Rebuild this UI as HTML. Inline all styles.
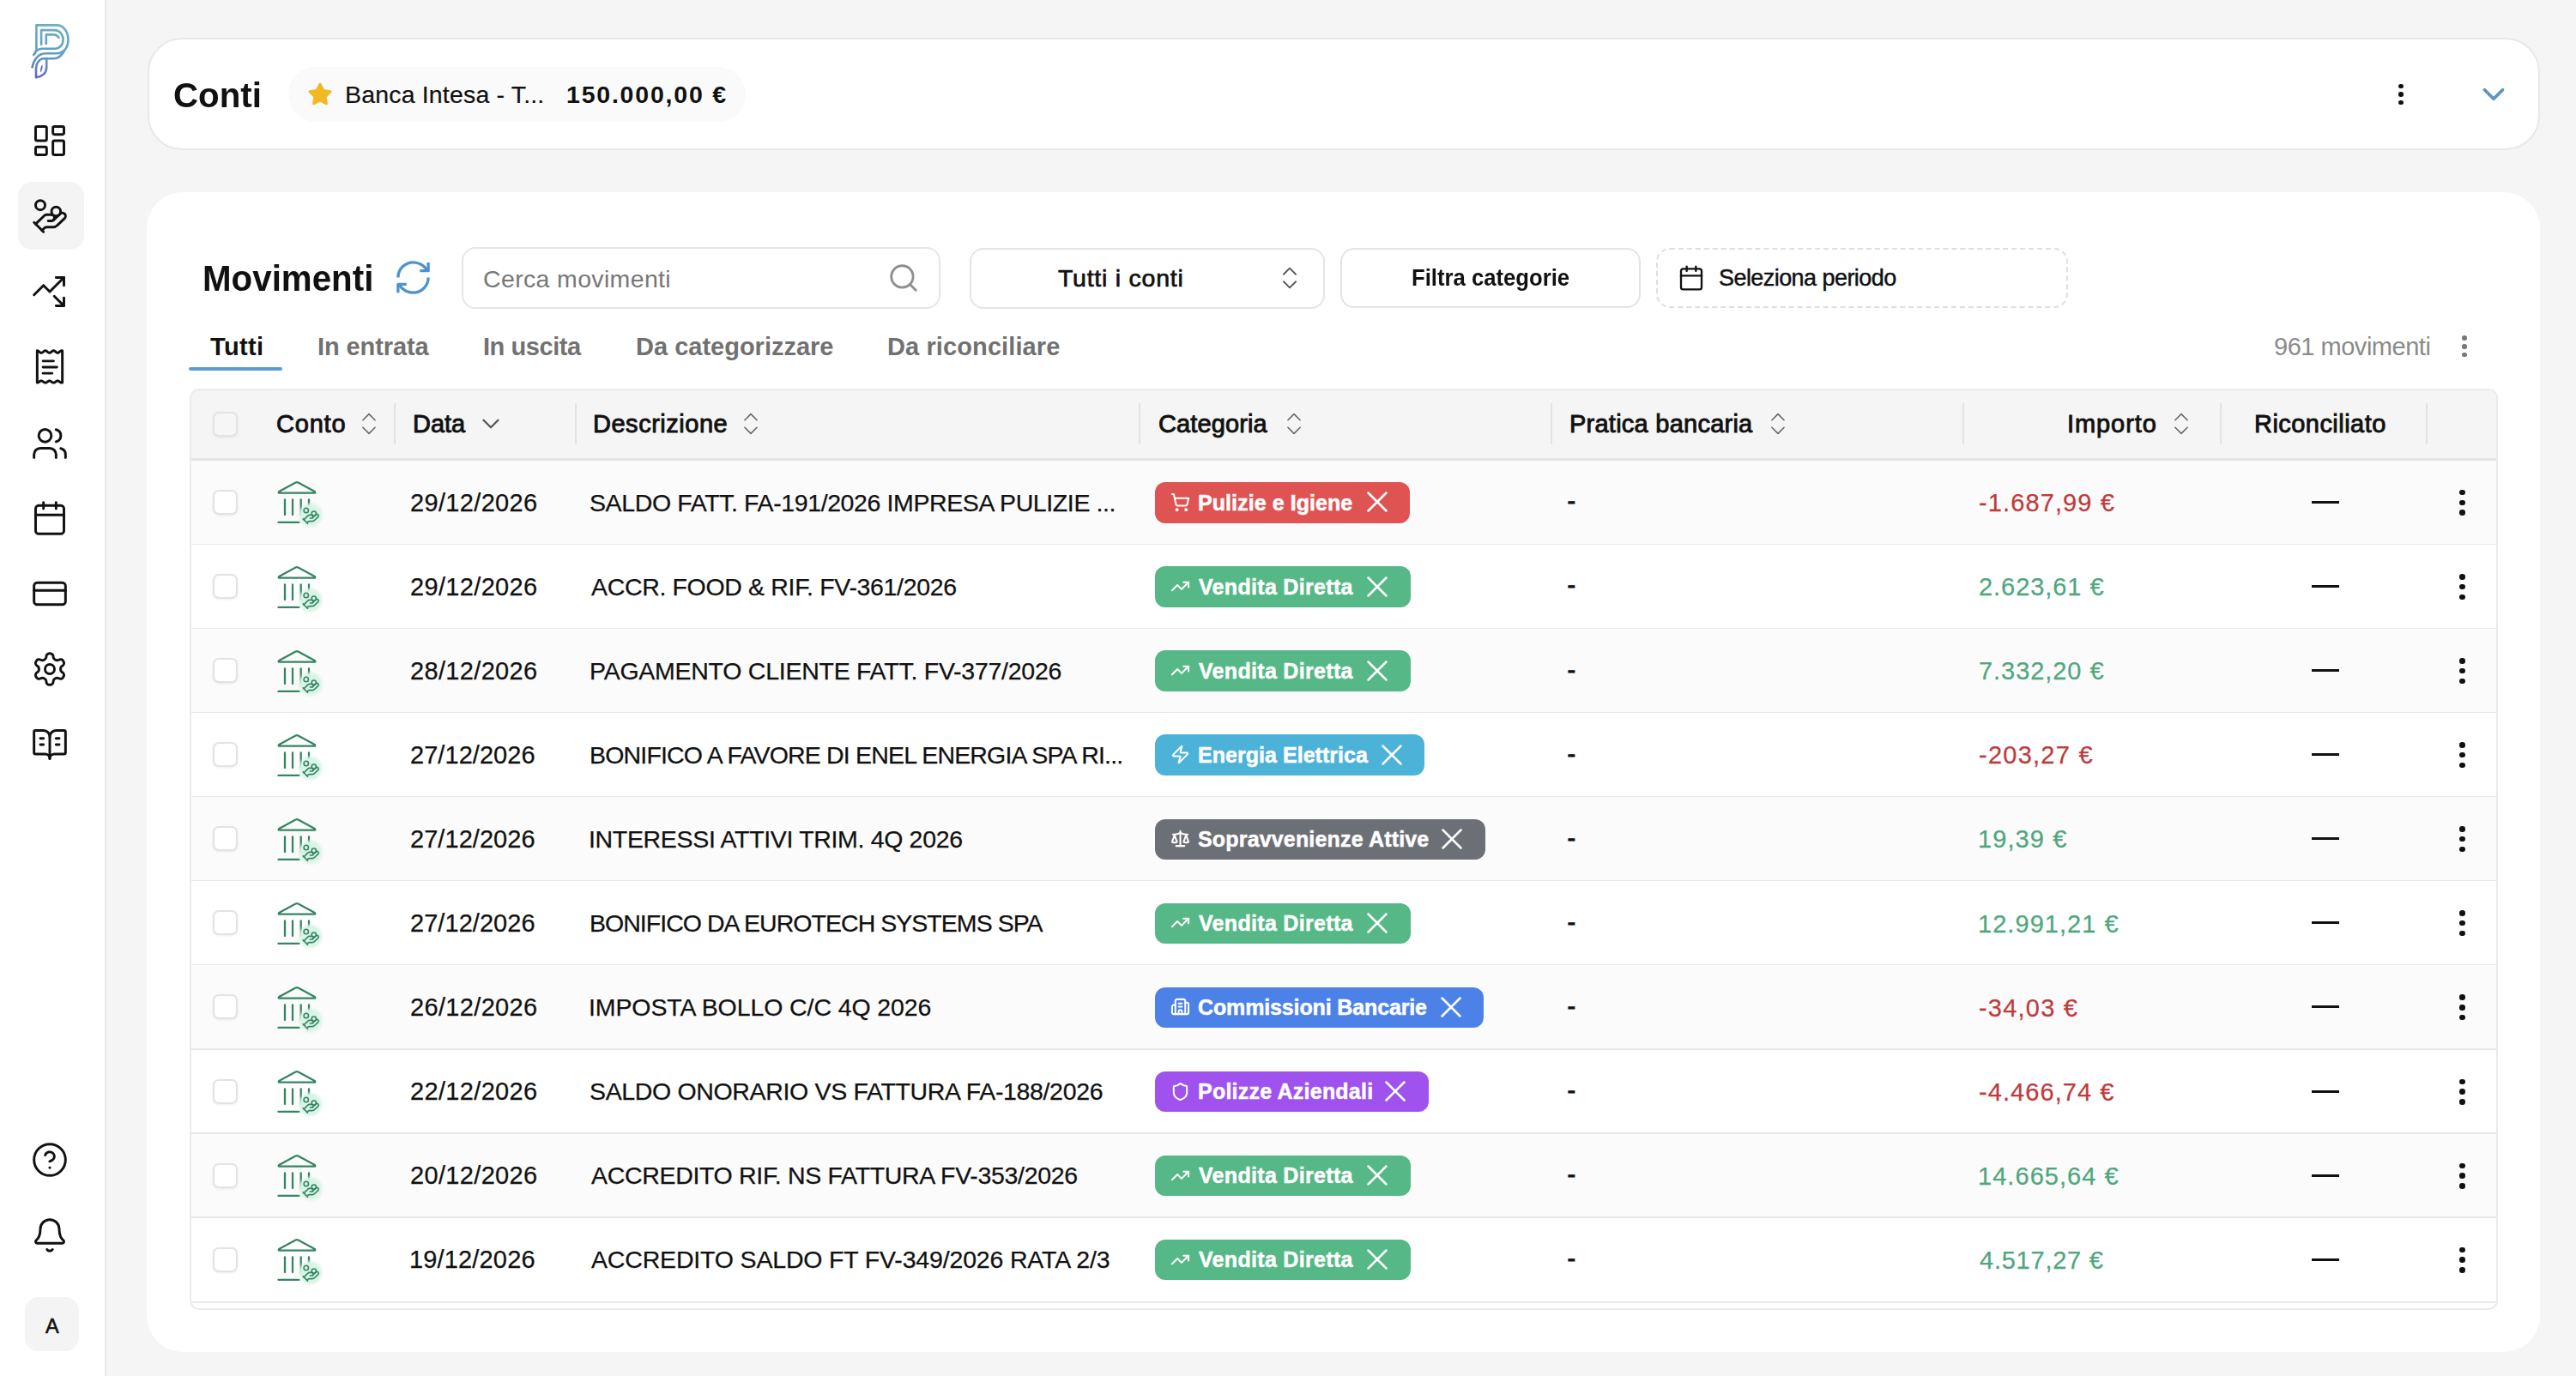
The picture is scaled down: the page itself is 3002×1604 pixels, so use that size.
<!DOCTYPE html>
<html><head><meta charset="utf-8"><title>Movimenti</title>
<style>
html,body{margin:0;padding:0;}
body{width:3002px;height:1604px;position:relative;overflow:hidden;background:#f5f5f5;font-family:"Liberation Sans", sans-serif;}
.t{position:absolute;white-space:nowrap;line-height:1;}
.b{position:absolute;}
.i{position:absolute;overflow:visible;}
</style></head><body>
<div class="b" style="left:0.0px;top:0.0px;width:122.0px;height:1604.0px;background:#fff;border-right:2px solid #e9e9e9;"></div>
<svg class="i" style="left:25px;top:20px" width="70" height="80" viewBox="25 20 70 80" fill="none" stroke-width="2.6" stroke-linecap="butt" stroke-linejoin="round">
<defs><linearGradient id="lg" gradientUnits="userSpaceOnUse" x1="62" y1="28" x2="44" y2="92"><stop offset="0" stop-color="#6cb0c2"/><stop offset="0.5" stop-color="#5f9fc3"/><stop offset="0.78" stop-color="#5d86c6"/><stop offset="1" stop-color="#5a5fcf"/></linearGradient></defs>
<g stroke="url(#lg)">
<path d="M42.4 57.7 V29.4 H66 C74 29.4 79.5 37 79.5 46.3 C79.5 51 78 55 75.9 57.7"/>
<path d="M42.4 57.7 C42 60.5 40.2 62.8 38.6 64.9"/>
<path d="M48.1 52.8 V35.1 H63.8 C69 35.1 73.6 40 73.6 45.9 C73.6 52 69.5 56.7 63.8 56.7 H50 C46 56.9 43.5 58 42.3 59.5"/>
<path d="M53.8 52.1 V40.4 H62.5 C65 40.4 67.5 42 69 44.6"/>
<path d="M75.9 57.7 C73.5 60.5 70.5 62.3 66 62.3 H53 C45 62.5 39 69 37.4 79.4"/>
<path d="M75.9 57.7 C73 63.5 69 68.3 63 68.3 H51 C45.5 68.5 42 74 42 80 V90.3 C49 89.5 54.2 85 54.2 79 V68.5"/>
</g>
<path d="M49.3 75 C50.2 79 49 82 47.3 84.8 C46.6 81 47.3 78 49.3 75Z" fill="#5b70c8"/>
</svg>
<div class="b" style="left:21.0px;top:212.0px;width:77.0px;height:79.0px;background:#f4f4f4;border-radius:16px;"></div>
<svg class="i" style="left:36.0px;top:141.7px;" width="44" height="44" viewBox="0 0 24 24" fill="none" stroke="#111" stroke-width="1.6" stroke-linecap="round" stroke-linejoin="round"><rect width="7" height="9" x="3" y="3" rx="1"/><rect width="7" height="5" x="14" y="3" rx="1"/><rect width="7" height="9" x="14" y="12" rx="1"/><rect width="7" height="5" x="3" y="16" rx="1"/></svg>
<svg class="i" style="left:36.0px;top:229.7px;" width="44" height="44" viewBox="0 0 24 24" fill="none" stroke="#111" stroke-width="1.6" stroke-linecap="round" stroke-linejoin="round"><path d="M11 15h2a2 2 0 1 0 0-4h-3c-.6 0-1.1.2-1.4.6L3 17"/><path d="m7 21 1.6-1.4c.3-.4.8-.6 1.4-.6h4c1.1 0 2.1-.4 2.8-1.2l4.6-4.4a2 2 0 0 0-2.75-2.91l-4.2 3.9"/><path d="m2 16 6 6"/><circle cx="16" cy="9" r="2.9"/><circle cx="6" cy="5" r="3"/></svg>
<svg class="i" style="left:36.0px;top:317.5px;" width="44" height="44" viewBox="0 0 24 24" fill="none" stroke="#111" stroke-width="1.6" stroke-linecap="round" stroke-linejoin="round"><path d="M14.828 14.828 21 21"/><path d="M21 16v5h-5"/><path d="m21 3-9 9-4-4-6 6"/><path d="M21 8V3h-5"/></svg>
<svg class="i" style="left:36.0px;top:406.0px;" width="44" height="44" viewBox="0 0 24 24" fill="none" stroke="#111" stroke-width="1.6" stroke-linecap="round" stroke-linejoin="round"><path d="M4.00 1.50 L4.25 1.53 L4.50 1.62 L4.75 1.77 L5.00 1.95 L5.25 2.16 L5.50 2.37 L5.75 2.56 L6.00 2.72 L6.25 2.84 L6.50 2.89 L6.75 2.89 L7.00 2.82 L7.25 2.69 L7.50 2.53 L7.75 2.33 L8.00 2.12 L8.25 1.91 L8.50 1.74 L8.75 1.60 L9.00 1.52 L9.25 1.50 L9.50 1.55 L9.75 1.65 L10.00 1.80 L10.25 1.99 L10.50 2.20 L10.75 2.41 L11.00 2.60 L11.25 2.75 L11.50 2.85 L11.75 2.90 L12.00 2.88 L12.25 2.80 L12.50 2.66 L12.75 2.49 L13.00 2.28 L13.25 2.07 L13.50 1.87 L13.75 1.71 L14.00 1.58 L14.25 1.51 L14.50 1.51 L14.75 1.56 L15.00 1.68 L15.25 1.84 L15.50 2.03 L15.75 2.24 L16.00 2.45 L16.25 2.63 L16.50 2.78 L16.75 2.87 L17.00 2.90 L17.25 2.87 L17.50 2.78 L17.75 2.63 L18.00 2.45 L18.25 2.24 L18.50 2.03 L18.75 1.84 L19.00 1.68 L19.25 1.56 L19.50 1.51 L19.75 1.51 L20.00 1.58 L20.00 21.83 L19.75 21.89 L19.50 21.90 L19.25 21.85 L19.00 21.75 L18.75 21.61 L18.50 21.44 L18.25 21.26 L18.00 21.09 L17.75 20.93 L17.50 20.81 L17.25 20.73 L17.00 20.70 L16.75 20.73 L16.50 20.81 L16.25 20.93 L16.00 21.09 L15.75 21.26 L15.50 21.44 L15.25 21.61 L15.00 21.75 L14.75 21.85 L14.50 21.90 L14.25 21.89 L14.00 21.83 L13.75 21.72 L13.50 21.58 L13.25 21.41 L13.00 21.23 L12.75 21.05 L12.50 20.90 L12.25 20.79 L12.00 20.72 L11.75 20.70 L11.50 20.74 L11.25 20.83 L11.00 20.96 L10.75 21.12 L10.50 21.30 L10.25 21.48 L10.00 21.64 L9.75 21.77 L9.50 21.86 L9.25 21.90 L9.00 21.88 L8.75 21.81 L8.50 21.70 L8.25 21.55 L8.00 21.37 L7.75 21.19 L7.50 21.02 L7.25 20.88 L7.00 20.77 L6.75 20.71 L6.50 20.70 L6.25 20.75 L6.00 20.85 L5.75 20.99 L5.50 21.16 L5.25 21.34 L5.00 21.51 L4.75 21.67 L4.50 21.79 L4.25 21.87 L4.00 21.90Z"/><path d="M7.7 8.1h6.7"/><path d="M7.7 12h8.8"/><path d="M7.7 15.9h5.7"/></svg>
<svg class="i" style="left:36.0px;top:494.6px;" width="44" height="44" viewBox="0 0 24 24" fill="none" stroke="#111" stroke-width="1.6" stroke-linecap="round" stroke-linejoin="round"><path d="M16 21v-2a4 4 0 0 0-4-4H6a4 4 0 0 0-4 4v2"/><circle cx="9" cy="7" r="4"/><path d="M22 21v-2a4 4 0 0 0-3-3.87"/><path d="M16 3.13a4 4 0 0 1 0 7.75"/></svg>
<svg class="i" style="left:36.0px;top:582.0px;" width="44" height="44" viewBox="0 0 24 24" fill="none" stroke="#111" stroke-width="1.6" stroke-linecap="round" stroke-linejoin="round"><path d="M8 2v4"/><path d="M16 2v4"/><rect width="18" height="18" x="3" y="4" rx="2"/><path d="M3 10h18"/></svg>
<svg class="i" style="left:36.0px;top:669.8px;" width="44" height="44" viewBox="0 0 24 24" fill="none" stroke="#111" stroke-width="1.6" stroke-linecap="round" stroke-linejoin="round"><rect width="20" height="14" x="2" y="5" rx="2"/><line x1="2" x2="22" y1="10" y2="10"/></svg>
<svg class="i" style="left:36.0px;top:757.7px;" width="44" height="44" viewBox="0 0 24 24" fill="none" stroke="#111" stroke-width="1.6" stroke-linecap="round" stroke-linejoin="round"><path d="M12.22 2h-.44a2 2 0 0 0-2 2v.18a2 2 0 0 1-1 1.73l-.43.25a2 2 0 0 1-2 0l-.15-.08a2 2 0 0 0-2.73.73l-.22.38a2 2 0 0 0 .73 2.73l.15.1a2 2 0 0 1 1 1.72v.51a2 2 0 0 1-1 1.74l-.15.09a2 2 0 0 0-.73 2.73l.22.38a2 2 0 0 0 2.73.73l.15-.08a2 2 0 0 1 2 0l.43.25a2 2 0 0 1 1 1.73V20a2 2 0 0 0 2 2h.44a2 2 0 0 0 2-2v-.18a2 2 0 0 1 1-1.73l.43-.25a2 2 0 0 1 2 0l.15.08a2 2 0 0 0 2.73-.73l.22-.39a2 2 0 0 0-.73-2.73l-.15-.08a2 2 0 0 1-1-1.74v-.5a2 2 0 0 1 1-1.74l.15-.09a2 2 0 0 0 .73-2.73l-.22-.38a2 2 0 0 0-2.73-.73l-.15.08a2 2 0 0 1-2 0l-.43-.25a2 2 0 0 1-1-1.73V4a2 2 0 0 0-2-2z"/><circle cx="12" cy="12" r="3"/></svg>
<svg class="i" style="left:36.0px;top:846.0px;" width="44" height="44" viewBox="0 0 24 24" fill="none" stroke="#111" stroke-width="1.6" stroke-linecap="round" stroke-linejoin="round"><path d="M12 7v14"/><path d="M16 12h2"/><path d="M16 8h2"/><path d="M3 18a1 1 0 0 1-1-1V4a1 1 0 0 1 1-1h5a4 4 0 0 1 4 4 4 4 0 0 1 4-4h5a1 1 0 0 1 1 1v13a1 1 0 0 1-1 1h-6a3 3 0 0 0-3 3 3 3 0 0 0-3-3z"/><path d="M6 12h2"/><path d="M6 8h2"/></svg>
<svg class="i" style="left:36.0px;top:1330.0px;" width="44" height="44" viewBox="0 0 24 24" fill="none" stroke="#111" stroke-width="1.6" stroke-linecap="round" stroke-linejoin="round"><circle cx="12" cy="12" r="10"/><path d="M9.09 9a3 3 0 0 1 5.83 1c0 2-3 3-3 3"/><path d="M12 17h.01"/></svg>
<svg class="i" style="left:36.0px;top:1418.0px;" width="44" height="44" viewBox="0 0 24 24" fill="none" stroke="#111" stroke-width="1.6" stroke-linecap="round" stroke-linejoin="round"><path d="M10.268 21a2 2 0 0 0 3.464 0"/><path d="M3.262 15.326A1 1 0 0 0 4 17h16a1 1 0 0 0 .74-1.673C19.41 13.956 18 12.499 18 8A6 6 0 0 0 6 8c0 4.499-1.411 5.956-2.738 7.326"/></svg>
<div class="b" style="left:29.0px;top:1512.0px;width:63.0px;height:63.0px;background:#f4f4f4;border-radius:16px;"></div>
<div class="t" id="t1" style="left:53.00px;top:1534.7px;font-size:23.5px;font-weight:400;color:#111;letter-spacing:-6.800px;-webkit-text-stroke:0.6px #111;">A</div>
<div class="b" style="left:172.0px;top:44.0px;width:2788.0px;height:131.0px;background:#fff;border:2px solid #e8e8e8;border-radius:40px;box-sizing:border-box;"></div>
<div class="t" id="t2" style="left:202.00px;top:90.7px;font-size:41px;font-weight:700;color:#111;letter-spacing:0.000px;transform:scaleX(0.9820);transform-origin:0 50%;">Conti</div>
<div class="b" style="left:336.0px;top:78.0px;width:533.0px;height:64.0px;background:#fafafa;border-radius:32px;"></div>
<svg class="i" style="left:358px;top:95px" width="30" height="30" viewBox="0 0 24 24" fill="#f2b823" stroke="#f2b823" stroke-width="1.5" stroke-linejoin="round"><path d="M11.525 2.295a.53.53 0 0 1 .95 0l2.31 4.679a2.123 2.123 0 0 0 1.595 1.16l5.166.756a.53.53 0 0 1 .294.904l-3.736 3.638a2.123 2.123 0 0 0-.611 1.878l.882 5.14a.53.53 0 0 1-.771.56l-4.618-2.428a2.122 2.122 0 0 0-1.973 0L6.396 21.01a.53.53 0 0 1-.77-.56l.881-5.139a2.122 2.122 0 0 0-.611-1.879L2.16 9.795a.53.53 0 0 1 .294-.906l5.165-.755a2.122 2.122 0 0 0 1.597-1.16z"/></svg>
<div class="t" id="t3" style="left:402.00px;top:95.7px;font-size:28.5px;font-weight:400;color:#111;letter-spacing:0.170px;-webkit-text-stroke:0.2px #111;">Banca Intesa - T...</div>
<div class="t" id="t4" style="left:660.00px;top:95.7px;font-size:28.5px;font-weight:700;color:#111;letter-spacing:1.788px;">150.000,00 €</div>
<div class="b" style="left:2795.2px;top:97.6px;width:5.6px;height:5.6px;background:#111;border-radius:50%;"></div>
<div class="b" style="left:2795.2px;top:107.2px;width:5.6px;height:5.6px;background:#111;border-radius:50%;"></div>
<div class="b" style="left:2795.2px;top:116.8px;width:5.6px;height:5.6px;background:#111;border-radius:50%;"></div>
<svg class="i" style="left:2885.0px;top:88.5px;" width="42" height="42" viewBox="0 0 24 24" fill="none" stroke="#5b95c0" stroke-width="2.2" stroke-linecap="round" stroke-linejoin="round"><path d="m6 9 6 6 6-6"/></svg>
<div class="b" style="left:170.5px;top:223.5px;width:2789.5px;height:1352.5px;background:#fff;border-radius:42px;"></div>
<div class="t" id="t5" style="left:236.00px;top:303.6px;font-size:42px;font-weight:700;color:#111;letter-spacing:0.000px;transform:scaleX(0.9599);transform-origin:0 50%;">Movimenti</div>
<svg class="i" style="left:457.5px;top:300.4px;stroke-linecap:butt;" width="47" height="47" viewBox="0 0 24 24" fill="none" stroke="#4f93ce" stroke-width="1.7" stroke-linecap="round" stroke-linejoin="round"><path d="M3 12a9 9 0 0 1 9-9 9.75 9.75 0 0 1 6.74 2.74L21 8"/><path d="M21 3v5h-5"/><path d="M21 12a9 9 0 0 1-9 9 9.75 9.75 0 0 1-6.74-2.74L3 16"/><path d="M8 16H3v5"/></svg>
<div class="b" style="left:537.5px;top:288.0px;width:558.0px;height:72.0px;background:#fff;border:2px solid #e6e6e6;border-radius:16px;box-sizing:border-box;"></div>
<div class="t" id="t6" style="left:563.00px;top:310.5px;font-size:28.5px;font-weight:400;color:#777777;letter-spacing:0.349px;">Cerca movimenti</div>
<svg class="i" style="left:1034.0px;top:304.5px;" width="38" height="38" viewBox="0 0 24 24" fill="none" stroke="#8e8e93" stroke-width="1.8" stroke-linecap="round" stroke-linejoin="round"><circle cx="11" cy="11" r="8"/><path d="m21 21-4.3-4.3"/></svg>
<div class="b" style="left:1130.0px;top:288.5px;width:414.0px;height:71.0px;background:#fff;border:2px solid #e4e4e4;border-radius:16px;box-sizing:border-box;"></div>
<div class="t" id="t7" style="left:1233.00px;top:309.5px;font-size:28.5px;font-weight:400;color:#111;letter-spacing:0.750px;-webkit-text-stroke:0.7px #111;">Tutti i conti</div>
<svg class="i" style="left:1485.5px;top:307.0px;" width="34" height="34" viewBox="0 0 24 24" fill="none" stroke="#555" stroke-width="1.3" stroke-linecap="round" stroke-linejoin="round"><path d="m7 15 5 5 5-5"/><path d="m7 9 5-5 5 5"/></svg>
<div class="b" style="left:1561.5px;top:289.0px;width:350.5px;height:70.0px;background:#fff;border:2px solid #e4e4e4;border-radius:16px;box-sizing:border-box;"></div>
<div class="t" id="t8" style="left:1645.00px;top:310.7px;font-size:27px;font-weight:700;color:#111;letter-spacing:0.000px;transform:scaleX(0.9509);transform-origin:0 50%;">Filtra categorie</div>
<div class="b" style="left:1929.5px;top:289.0px;width:480.5px;height:70.0px;background:#fff;border:2px dashed #dedede;border-radius:16px;box-sizing:border-box;"></div>
<svg class="i" style="left:1955.0px;top:308.0px;" width="32" height="32" viewBox="0 0 24 24" fill="none" stroke="#111" stroke-width="1.75" stroke-linecap="round" stroke-linejoin="round"><path d="M8 2v4"/><path d="M16 2v4"/><rect width="18" height="18" x="3" y="4" rx="2"/><path d="M3 10h18"/></svg>
<div class="t" id="t9" style="left:2003.00px;top:310.9px;font-size:27px;font-weight:400;color:#111;letter-spacing:-0.562px;-webkit-text-stroke:0.45px #111;">Seleziona periodo</div>
<div class="t" id="t10" style="left:245.00px;top:390.1px;font-size:29px;font-weight:700;color:#111;letter-spacing:0.375px;">Tutti</div>
<div class="t" id="t11" style="left:370.00px;top:390.1px;font-size:29px;font-weight:700;color:#717171;letter-spacing:-0.087px;">In entrata</div>
<div class="t" id="t12" style="left:563.00px;top:390.1px;font-size:29px;font-weight:700;color:#717171;letter-spacing:-0.440px;">In uscita</div>
<div class="t" id="t13" style="left:741.00px;top:390.1px;font-size:29px;font-weight:700;color:#717171;letter-spacing:0.000px;">Da categorizzare</div>
<div class="t" id="t14" style="left:1034.00px;top:390.1px;font-size:29px;font-weight:700;color:#717171;letter-spacing:0.107px;">Da riconciliare</div>
<div class="b" style="left:220.0px;top:427.8px;width:109.0px;height:4.2px;background:#5b9bd5;border-radius:2px;"></div>
<div class="t" id="t15" style="left:2650.00px;top:390.1px;font-size:29px;font-weight:400;color:#8a8a8a;letter-spacing:-0.476px;">961 movimenti</div>
<div class="b" style="left:2869.2px;top:391.2px;width:5.6px;height:5.6px;background:#777;border-radius:50%;"></div>
<div class="b" style="left:2869.2px;top:401.2px;width:5.6px;height:5.6px;background:#777;border-radius:50%;"></div>
<div class="b" style="left:2869.2px;top:410.7px;width:5.6px;height:5.6px;background:#777;border-radius:50%;"></div>
<div class="b" style="left:221px;top:452.7px;width:2690px;height:1074.5px;border:2px solid #ebebeb;border-radius:11px;box-sizing:border-box;overflow:hidden;background:#fff">
<div class="b" style="left:-2.0px;top:-2.0px;width:2690.0px;height:84.0px;background:#f5f5f5;"></div>
<div class="b" style="left:-2.0px;top:79.3px;width:2690.0px;height:3.0px;background:#e4e4e4;"></div>
<div class="b" style="left:-2.0px;top:82.3px;width:2690.0px;height:98.1px;background:#fbfbfb;"></div>
<div class="b" style="left:-2.0px;top:179.2px;width:2690.0px;height:2.0px;background:#e8e8e8;"></div>
<div class="b" style="left:-2.0px;top:180.4px;width:2690.0px;height:98.1px;background:#ffffff;"></div>
<div class="b" style="left:-2.0px;top:277.3px;width:2690.0px;height:2.0px;background:#e8e8e8;"></div>
<div class="b" style="left:-2.0px;top:278.5px;width:2690.0px;height:98.1px;background:#fbfbfb;"></div>
<div class="b" style="left:-2.0px;top:375.4px;width:2690.0px;height:2.0px;background:#e8e8e8;"></div>
<div class="b" style="left:-2.0px;top:376.5px;width:2690.0px;height:98.1px;background:#ffffff;"></div>
<div class="b" style="left:-2.0px;top:473.4px;width:2690.0px;height:2.0px;background:#e8e8e8;"></div>
<div class="b" style="left:-2.0px;top:474.6px;width:2690.0px;height:98.1px;background:#fbfbfb;"></div>
<div class="b" style="left:-2.0px;top:571.5px;width:2690.0px;height:2.0px;background:#e8e8e8;"></div>
<div class="b" style="left:-2.0px;top:572.7px;width:2690.0px;height:98.1px;background:#ffffff;"></div>
<div class="b" style="left:-2.0px;top:669.6px;width:2690.0px;height:2.0px;background:#e8e8e8;"></div>
<div class="b" style="left:-2.0px;top:670.8px;width:2690.0px;height:98.1px;background:#fbfbfb;"></div>
<div class="b" style="left:-2.0px;top:767.7px;width:2690.0px;height:2.0px;background:#e8e8e8;"></div>
<div class="b" style="left:-2.0px;top:768.9px;width:2690.0px;height:98.1px;background:#ffffff;"></div>
<div class="b" style="left:-2.0px;top:865.8px;width:2690.0px;height:2.0px;background:#e8e8e8;"></div>
<div class="b" style="left:-2.0px;top:866.9px;width:2690.0px;height:98.1px;background:#fbfbfb;"></div>
<div class="b" style="left:-2.0px;top:963.8px;width:2690.0px;height:2.0px;background:#e8e8e8;"></div>
<div class="b" style="left:-2.0px;top:965.0px;width:2690.0px;height:98.1px;background:#ffffff;"></div>
<div class="b" style="left:-2.0px;top:1061.9px;width:2690.0px;height:2.0px;background:#e8e8e8;"></div>
</div>
<div class="b" style="left:459.0px;top:469.6px;width:2.0px;height:48.5px;background:#e2e2e2;"></div>
<div class="b" style="left:669.7px;top:469.6px;width:2.0px;height:48.5px;background:#e2e2e2;"></div>
<div class="b" style="left:1327.0px;top:469.6px;width:2.0px;height:48.5px;background:#e2e2e2;"></div>
<div class="b" style="left:1806.5px;top:469.6px;width:2.0px;height:48.5px;background:#e2e2e2;"></div>
<div class="b" style="left:2286.6px;top:469.6px;width:2.0px;height:48.5px;background:#e2e2e2;"></div>
<div class="b" style="left:2587.0px;top:469.6px;width:2.0px;height:48.5px;background:#e2e2e2;"></div>
<div class="b" style="left:2827.0px;top:469.6px;width:2.0px;height:48.5px;background:#e2e2e2;"></div>
<div class="b" style="left:247.5px;top:479.5px;width:29.0px;height:29.0px;background:#f6f6f6;border:2px solid #e3e3e3;border-radius:7px;box-sizing:border-box;box-shadow:0 1px 3px rgba(0,0,0,0.07);"></div>
<div class="t" id="t16" style="left:322.00px;top:479.5px;font-size:29px;font-weight:400;color:#111;letter-spacing:0.800px;-webkit-text-stroke:0.9px #111;">Conto</div>
<svg class="i" style="left:413.0px;top:476.5px;" width="34" height="34" viewBox="0 0 24 24" fill="none" stroke="#666" stroke-width="1.1" stroke-linecap="round" stroke-linejoin="round"><path d="m7 15 5 5 5-5"/><path d="m7 9 5-5 5 5"/></svg>
<div class="t" id="t17" style="left:481.00px;top:479.5px;font-size:29px;font-weight:400;color:#111;letter-spacing:-0.034px;-webkit-text-stroke:0.9px #111;">Data</div>
<svg class="i" style="left:554.5px;top:477.0px;" width="34" height="34" viewBox="0 0 24 24" fill="none" stroke="#555" stroke-width="1.6" stroke-linecap="round" stroke-linejoin="round"><path d="m6 9 6 6 6-6"/></svg>
<div class="t" id="t18" style="left:691.00px;top:479.5px;font-size:29px;font-weight:400;color:#111;letter-spacing:0.520px;-webkit-text-stroke:0.9px #111;">Descrizione</div>
<svg class="i" style="left:858.0px;top:476.5px;" width="34" height="34" viewBox="0 0 24 24" fill="none" stroke="#666" stroke-width="1.1" stroke-linecap="round" stroke-linejoin="round"><path d="m7 15 5 5 5-5"/><path d="m7 9 5-5 5 5"/></svg>
<div class="t" id="t19" style="left:1350.00px;top:479.5px;font-size:29px;font-weight:400;color:#111;letter-spacing:0.108px;-webkit-text-stroke:0.9px #111;">Categoria</div>
<svg class="i" style="left:1490.5px;top:476.5px;" width="34" height="34" viewBox="0 0 24 24" fill="none" stroke="#666" stroke-width="1.1" stroke-linecap="round" stroke-linejoin="round"><path d="m7 15 5 5 5-5"/><path d="m7 9 5-5 5 5"/></svg>
<div class="t" id="t20" style="left:1829.00px;top:479.5px;font-size:29px;font-weight:400;color:#111;letter-spacing:0.246px;-webkit-text-stroke:0.9px #111;">Pratica bancaria</div>
<svg class="i" style="left:2054.5px;top:476.5px;" width="34" height="34" viewBox="0 0 24 24" fill="none" stroke="#666" stroke-width="1.1" stroke-linecap="round" stroke-linejoin="round"><path d="m7 15 5 5 5-5"/><path d="m7 9 5-5 5 5"/></svg>
<div class="t" id="t21" style="left:2409.00px;top:479.5px;font-size:29px;font-weight:400;color:#111;letter-spacing:0.917px;-webkit-text-stroke:0.9px #111;">Importo</div>
<svg class="i" style="left:2524.5px;top:476.5px;" width="34" height="34" viewBox="0 0 24 24" fill="none" stroke="#666" stroke-width="1.1" stroke-linecap="round" stroke-linejoin="round"><path d="m7 15 5 5 5-5"/><path d="m7 9 5-5 5 5"/></svg>
<div class="t" id="t22" style="left:2627.00px;top:479.5px;font-size:29px;font-weight:400;color:#111;letter-spacing:0.455px;-webkit-text-stroke:0.9px #111;">Riconciliato</div>
<div class="b" style="left:247.5px;top:570.9px;width:29.0px;height:29.0px;background:#fff;border:2px solid #e3e3e3;border-radius:7px;box-sizing:border-box;box-shadow:0 1px 3px rgba(0,0,0,0.07);"></div>
<svg class="i" style="left:310px;top:555.4px" width="70" height="70" viewBox="0 0 70 70" fill="none" stroke="#358563" stroke-width="2.3" stroke-linecap="round" stroke-linejoin="round"><path d="M34.5 7.6 Q36 6.6 37.5 7.6 L56.8 18 Q58 19.6 56.5 19.6 H15.5 Q14 19.6 15.2 18 Z"/><path d="M22 27.4v17.6"/><path d="M31 27.4v17.6"/><path d="M40.7 27.4v17.6"/><path d="M50 27.4v17.6"/><path d="M14.5 53.9h24"/><circle cx="51.8" cy="45.4" r="13.5" fill="#d9f4e5" stroke="none" style="filter:blur(1.5px)"/><g transform="translate(41.4,35.5) scale(0.9)" stroke-width="1.8"><path d="M11 15h2a2 2 0 1 0 0-4h-3c-.6 0-1.1.2-1.4.6L3 17"/><path d="m7 21 1.6-1.4c.3-.4.8-.6 1.4-.6h4c1.1 0 2.1-.4 2.8-1.2l4.6-4.4a2 2 0 0 0-2.75-2.91l-4.2 3.9"/><path d="m2 16 6 6"/><circle cx="16" cy="9" r="2.9"/><circle cx="6" cy="5" r="3"/></g></svg>
<div class="t" id="t23" style="left:478.00px;top:571.5px;font-size:29px;font-weight:400;color:#111;letter-spacing:0.333px;-webkit-text-stroke:0.25px #111;">29/12/2026</div>
<div class="t" id="t24" style="left:687.00px;top:571.7px;font-size:28.5px;font-weight:400;color:#111;letter-spacing:-0.390px;-webkit-text-stroke:0.25px #111;">SALDO FATT. FA-191/2026 IMPRESA PULIZIE ...</div>
<div class="b" style="left:1346.0px;top:562.2px;width:297.0px;height:47.5px;background:#e05353;border-radius:12px;"></div>
<svg class="i" style="left:1364.0px;top:573.9px;" width="23" height="23" viewBox="0 0 24 24" fill="none" stroke="#fff" stroke-width="2.1" stroke-linecap="round" stroke-linejoin="round"><circle cx="8" cy="21" r="1"/><circle cx="19" cy="21" r="1"/><path d="M2.05 2.05h2l2.66 12.42a2 2 0 0 0 2 1.58h9.78a2 2 0 0 0 1.95-1.57l1.65-7.43H5.12"/></svg>
<div class="t" id="t25" style="left:1396.00px;top:573.6px;font-size:25px;font-weight:700;color:#fff;letter-spacing:0.067px;-webkit-text-stroke:0.5px #fff;">Pulizie e Igiene</div>
<svg class="i" style="left:1583.5px;top:564.4px;" width="42" height="42" viewBox="0 0 24 24" fill="none" stroke="#fff" stroke-width="1.45" stroke-linecap="round" stroke-linejoin="round"><path d="M18 6 6 18"/><path d="m6 6 12 12"/></svg>
<div class="t" id="t26" style="left:1826.50px;top:570.4px;font-size:29px;font-weight:400;color:#111;letter-spacing:0.000px;-webkit-text-stroke:0.9px #111;">-</div>
<div class="t" id="t27" style="left:2306.00px;top:572.1px;font-size:29px;font-weight:400;color:#bf3a3c;letter-spacing:1.110px;-webkit-text-stroke:0.25px #bf3a3c;">-1.687,99 €</div>
<div class="b" style="left:2694.0px;top:583.9px;width:31.7px;height:3.0px;background:#111;"></div>
<div class="b" style="left:2866.2px;top:570.9px;width:6.6px;height:6.6px;background:#111;border-radius:50%;"></div>
<div class="b" style="left:2866.2px;top:582.5px;width:6.6px;height:6.6px;background:#111;border-radius:50%;"></div>
<div class="b" style="left:2866.2px;top:594.4px;width:6.6px;height:6.6px;background:#111;border-radius:50%;"></div>
<div class="b" style="left:247.5px;top:669.0px;width:29.0px;height:29.0px;background:#fff;border:2px solid #e3e3e3;border-radius:7px;box-sizing:border-box;box-shadow:0 1px 3px rgba(0,0,0,0.07);"></div>
<svg class="i" style="left:310px;top:653.5px" width="70" height="70" viewBox="0 0 70 70" fill="none" stroke="#358563" stroke-width="2.3" stroke-linecap="round" stroke-linejoin="round"><path d="M34.5 7.6 Q36 6.6 37.5 7.6 L56.8 18 Q58 19.6 56.5 19.6 H15.5 Q14 19.6 15.2 18 Z"/><path d="M22 27.4v17.6"/><path d="M31 27.4v17.6"/><path d="M40.7 27.4v17.6"/><path d="M50 27.4v17.6"/><path d="M14.5 53.9h24"/><circle cx="51.8" cy="45.4" r="13.5" fill="#d9f4e5" stroke="none" style="filter:blur(1.5px)"/><g transform="translate(41.4,35.5) scale(0.9)" stroke-width="1.8"><path d="M11 15h2a2 2 0 1 0 0-4h-3c-.6 0-1.1.2-1.4.6L3 17"/><path d="m7 21 1.6-1.4c.3-.4.8-.6 1.4-.6h4c1.1 0 2.1-.4 2.8-1.2l4.6-4.4a2 2 0 0 0-2.75-2.91l-4.2 3.9"/><path d="m2 16 6 6"/><circle cx="16" cy="9" r="2.9"/><circle cx="6" cy="5" r="3"/></g></svg>
<div class="t" id="t28" style="left:478.00px;top:669.5px;font-size:29px;font-weight:400;color:#111;letter-spacing:0.333px;-webkit-text-stroke:0.25px #111;">29/12/2026</div>
<div class="t" id="t29" style="left:689.00px;top:669.8px;font-size:28.5px;font-weight:400;color:#111;letter-spacing:-0.340px;-webkit-text-stroke:0.25px #111;">ACCR. FOOD &amp; RIF. FV-361/2026</div>
<div class="b" style="left:1346.0px;top:660.3px;width:297.6px;height:47.5px;background:#55b886;border-radius:12px;"></div>
<svg class="i" style="left:1364.0px;top:672.0px;" width="23" height="23" viewBox="0 0 24 24" fill="none" stroke="#fff" stroke-width="2.1" stroke-linecap="round" stroke-linejoin="round"><polyline points="22 7 13.5 15.5 8.5 10.5 2 17"/><polyline points="16 7 22 7 22 13"/></svg>
<div class="t" id="t30" style="left:1397.00px;top:671.7px;font-size:25px;font-weight:700;color:#fff;letter-spacing:0.313px;-webkit-text-stroke:0.5px #fff;">Vendita Diretta</div>
<svg class="i" style="left:1584.1px;top:662.5px;" width="42" height="42" viewBox="0 0 24 24" fill="none" stroke="#fff" stroke-width="1.45" stroke-linecap="round" stroke-linejoin="round"><path d="M18 6 6 18"/><path d="m6 6 12 12"/></svg>
<div class="t" id="t31" style="left:1826.50px;top:668.4px;font-size:29px;font-weight:400;color:#111;letter-spacing:0.000px;-webkit-text-stroke:0.9px #111;">-</div>
<div class="t" id="t32" style="left:2306.00px;top:670.1px;font-size:29px;font-weight:400;color:#4fa77d;letter-spacing:0.944px;-webkit-text-stroke:0.25px #4fa77d;">2.623,61 €</div>
<div class="b" style="left:2694.0px;top:682.0px;width:31.7px;height:3.0px;background:#111;"></div>
<div class="b" style="left:2866.2px;top:669.0px;width:6.6px;height:6.6px;background:#111;border-radius:50%;"></div>
<div class="b" style="left:2866.2px;top:680.6px;width:6.6px;height:6.6px;background:#111;border-radius:50%;"></div>
<div class="b" style="left:2866.2px;top:692.5px;width:6.6px;height:6.6px;background:#111;border-radius:50%;"></div>
<div class="b" style="left:247.5px;top:767.1px;width:29.0px;height:29.0px;background:#fff;border:2px solid #e3e3e3;border-radius:7px;box-sizing:border-box;box-shadow:0 1px 3px rgba(0,0,0,0.07);"></div>
<svg class="i" style="left:310px;top:751.6px" width="70" height="70" viewBox="0 0 70 70" fill="none" stroke="#358563" stroke-width="2.3" stroke-linecap="round" stroke-linejoin="round"><path d="M34.5 7.6 Q36 6.6 37.5 7.6 L56.8 18 Q58 19.6 56.5 19.6 H15.5 Q14 19.6 15.2 18 Z"/><path d="M22 27.4v17.6"/><path d="M31 27.4v17.6"/><path d="M40.7 27.4v17.6"/><path d="M50 27.4v17.6"/><path d="M14.5 53.9h24"/><circle cx="51.8" cy="45.4" r="13.5" fill="#d9f4e5" stroke="none" style="filter:blur(1.5px)"/><g transform="translate(41.4,35.5) scale(0.9)" stroke-width="1.8"><path d="M11 15h2a2 2 0 1 0 0-4h-3c-.6 0-1.1.2-1.4.6L3 17"/><path d="m7 21 1.6-1.4c.3-.4.8-.6 1.4-.6h4c1.1 0 2.1-.4 2.8-1.2l4.6-4.4a2 2 0 0 0-2.75-2.91l-4.2 3.9"/><path d="m2 16 6 6"/><circle cx="16" cy="9" r="2.9"/><circle cx="6" cy="5" r="3"/></g></svg>
<div class="t" id="t33" style="left:478.00px;top:767.6px;font-size:29px;font-weight:400;color:#111;letter-spacing:0.333px;-webkit-text-stroke:0.25px #111;">28/12/2026</div>
<div class="t" id="t34" style="left:687.00px;top:767.8px;font-size:28.5px;font-weight:400;color:#111;letter-spacing:-0.257px;-webkit-text-stroke:0.25px #111;">PAGAMENTO CLIENTE FATT. FV-377/2026</div>
<div class="b" style="left:1346.0px;top:758.4px;width:297.6px;height:47.5px;background:#55b886;border-radius:12px;"></div>
<svg class="i" style="left:1364.0px;top:770.1px;" width="23" height="23" viewBox="0 0 24 24" fill="none" stroke="#fff" stroke-width="2.1" stroke-linecap="round" stroke-linejoin="round"><polyline points="22 7 13.5 15.5 8.5 10.5 2 17"/><polyline points="16 7 22 7 22 13"/></svg>
<div class="t" id="t35" style="left:1397.00px;top:769.8px;font-size:25px;font-weight:700;color:#fff;letter-spacing:0.313px;-webkit-text-stroke:0.5px #fff;">Vendita Diretta</div>
<svg class="i" style="left:1584.1px;top:760.6px;" width="42" height="42" viewBox="0 0 24 24" fill="none" stroke="#fff" stroke-width="1.45" stroke-linecap="round" stroke-linejoin="round"><path d="M18 6 6 18"/><path d="m6 6 12 12"/></svg>
<div class="t" id="t36" style="left:1826.50px;top:766.5px;font-size:29px;font-weight:400;color:#111;letter-spacing:0.000px;-webkit-text-stroke:0.9px #111;">-</div>
<div class="t" id="t37" style="left:2306.00px;top:768.2px;font-size:29px;font-weight:400;color:#4fa77d;letter-spacing:0.944px;-webkit-text-stroke:0.25px #4fa77d;">7.332,20 €</div>
<div class="b" style="left:2694.0px;top:780.1px;width:31.7px;height:3.0px;background:#111;"></div>
<div class="b" style="left:2866.2px;top:767.1px;width:6.6px;height:6.6px;background:#111;border-radius:50%;"></div>
<div class="b" style="left:2866.2px;top:778.7px;width:6.6px;height:6.6px;background:#111;border-radius:50%;"></div>
<div class="b" style="left:2866.2px;top:790.6px;width:6.6px;height:6.6px;background:#111;border-radius:50%;"></div>
<div class="b" style="left:247.5px;top:865.1px;width:29.0px;height:29.0px;background:#fff;border:2px solid #e3e3e3;border-radius:7px;box-sizing:border-box;box-shadow:0 1px 3px rgba(0,0,0,0.07);"></div>
<svg class="i" style="left:310px;top:849.6px" width="70" height="70" viewBox="0 0 70 70" fill="none" stroke="#358563" stroke-width="2.3" stroke-linecap="round" stroke-linejoin="round"><path d="M34.5 7.6 Q36 6.6 37.5 7.6 L56.8 18 Q58 19.6 56.5 19.6 H15.5 Q14 19.6 15.2 18 Z"/><path d="M22 27.4v17.6"/><path d="M31 27.4v17.6"/><path d="M40.7 27.4v17.6"/><path d="M50 27.4v17.6"/><path d="M14.5 53.9h24"/><circle cx="51.8" cy="45.4" r="13.5" fill="#d9f4e5" stroke="none" style="filter:blur(1.5px)"/><g transform="translate(41.4,35.5) scale(0.9)" stroke-width="1.8"><path d="M11 15h2a2 2 0 1 0 0-4h-3c-.6 0-1.1.2-1.4.6L3 17"/><path d="m7 21 1.6-1.4c.3-.4.8-.6 1.4-.6h4c1.1 0 2.1-.4 2.8-1.2l4.6-4.4a2 2 0 0 0-2.75-2.91l-4.2 3.9"/><path d="m2 16 6 6"/><circle cx="16" cy="9" r="2.9"/><circle cx="6" cy="5" r="3"/></g></svg>
<div class="t" id="t38" style="left:478.00px;top:865.7px;font-size:29px;font-weight:400;color:#111;letter-spacing:0.048px;-webkit-text-stroke:0.25px #111;">27/12/2026</div>
<div class="t" id="t39" style="left:687.00px;top:865.9px;font-size:28.5px;font-weight:400;color:#111;letter-spacing:-0.822px;-webkit-text-stroke:0.25px #111;">BONIFICO A FAVORE DI ENEL ENERGIA SPA RI...</div>
<div class="b" style="left:1346.0px;top:856.4px;width:314.0px;height:47.5px;background:#4cb2d8;border-radius:12px;"></div>
<svg class="i" style="left:1364.0px;top:868.1px;" width="23" height="23" viewBox="0 0 24 24" fill="none" stroke="#fff" stroke-width="2.1" stroke-linecap="round" stroke-linejoin="round"><path d="M4 14a1 1 0 0 1-.78-1.63l9.9-10.2a.5.5 0 0 1 .86.46l-1.92 6.02A1 1 0 0 0 13 10h7a1 1 0 0 1 .78 1.63l-9.9 10.2a.5.5 0 0 1-.86-.46l1.92-6.02A1 1 0 0 0 11 14z"/></svg>
<div class="t" id="t40" style="left:1396.00px;top:867.9px;font-size:25px;font-weight:700;color:#fff;letter-spacing:0.040px;-webkit-text-stroke:0.5px #fff;">Energia Elettrica</div>
<svg class="i" style="left:1600.5px;top:858.6px;" width="42" height="42" viewBox="0 0 24 24" fill="none" stroke="#fff" stroke-width="1.45" stroke-linecap="round" stroke-linejoin="round"><path d="M18 6 6 18"/><path d="m6 6 12 12"/></svg>
<div class="t" id="t41" style="left:1826.50px;top:864.6px;font-size:29px;font-weight:400;color:#111;letter-spacing:0.000px;-webkit-text-stroke:0.9px #111;">-</div>
<div class="t" id="t42" style="left:2306.00px;top:866.3px;font-size:29px;font-weight:400;color:#bf3a3c;letter-spacing:1.250px;-webkit-text-stroke:0.25px #bf3a3c;">-203,27 €</div>
<div class="b" style="left:2694.0px;top:878.1px;width:31.7px;height:3.0px;background:#111;"></div>
<div class="b" style="left:2866.2px;top:865.1px;width:6.6px;height:6.6px;background:#111;border-radius:50%;"></div>
<div class="b" style="left:2866.2px;top:876.7px;width:6.6px;height:6.6px;background:#111;border-radius:50%;"></div>
<div class="b" style="left:2866.2px;top:888.6px;width:6.6px;height:6.6px;background:#111;border-radius:50%;"></div>
<div class="b" style="left:247.5px;top:963.2px;width:29.0px;height:29.0px;background:#fff;border:2px solid #e3e3e3;border-radius:7px;box-sizing:border-box;box-shadow:0 1px 3px rgba(0,0,0,0.07);"></div>
<svg class="i" style="left:310px;top:947.7px" width="70" height="70" viewBox="0 0 70 70" fill="none" stroke="#358563" stroke-width="2.3" stroke-linecap="round" stroke-linejoin="round"><path d="M34.5 7.6 Q36 6.6 37.5 7.6 L56.8 18 Q58 19.6 56.5 19.6 H15.5 Q14 19.6 15.2 18 Z"/><path d="M22 27.4v17.6"/><path d="M31 27.4v17.6"/><path d="M40.7 27.4v17.6"/><path d="M50 27.4v17.6"/><path d="M14.5 53.9h24"/><circle cx="51.8" cy="45.4" r="13.5" fill="#d9f4e5" stroke="none" style="filter:blur(1.5px)"/><g transform="translate(41.4,35.5) scale(0.9)" stroke-width="1.8"><path d="M11 15h2a2 2 0 1 0 0-4h-3c-.6 0-1.1.2-1.4.6L3 17"/><path d="m7 21 1.6-1.4c.3-.4.8-.6 1.4-.6h4c1.1 0 2.1-.4 2.8-1.2l4.6-4.4a2 2 0 0 0-2.75-2.91l-4.2 3.9"/><path d="m2 16 6 6"/><circle cx="16" cy="9" r="2.9"/><circle cx="6" cy="5" r="3"/></g></svg>
<div class="t" id="t43" style="left:478.00px;top:963.8px;font-size:29px;font-weight:400;color:#111;letter-spacing:0.048px;-webkit-text-stroke:0.25px #111;">27/12/2026</div>
<div class="t" id="t44" style="left:686.00px;top:964.0px;font-size:28.5px;font-weight:400;color:#111;letter-spacing:-0.329px;-webkit-text-stroke:0.25px #111;">INTERESSI ATTIVI TRIM. 4Q 2026</div>
<div class="b" style="left:1346.0px;top:954.5px;width:384.5px;height:47.5px;background:#6d6f77;border-radius:12px;"></div>
<svg class="i" style="left:1364.0px;top:966.2px;" width="23" height="23" viewBox="0 0 24 24" fill="none" stroke="#fff" stroke-width="2.1" stroke-linecap="round" stroke-linejoin="round"><path d="m16 16 3-8 3 8c-.87.65-1.92 1-3 1s-2.13-.35-3-1Z"/><path d="m2 16 3-8 3 8c-.87.65-1.92 1-3 1s-2.13-.35-3-1Z"/><path d="M7 21h10"/><path d="M12 3v18"/><path d="M3 7h2c2 0 5-1 7-2 2 1 5 2 7 2h2"/></svg>
<div class="t" id="t45" style="left:1396.00px;top:966.0px;font-size:25px;font-weight:700;color:#fff;letter-spacing:0.170px;-webkit-text-stroke:0.5px #fff;">Sopravvenienze Attive</div>
<svg class="i" style="left:1671.0px;top:956.7px;" width="42" height="42" viewBox="0 0 24 24" fill="none" stroke="#fff" stroke-width="1.45" stroke-linecap="round" stroke-linejoin="round"><path d="M18 6 6 18"/><path d="m6 6 12 12"/></svg>
<div class="t" id="t46" style="left:1826.50px;top:962.7px;font-size:29px;font-weight:400;color:#111;letter-spacing:0.000px;-webkit-text-stroke:0.9px #111;">-</div>
<div class="t" id="t47" style="left:2305.00px;top:964.4px;font-size:29px;font-weight:400;color:#4fa77d;letter-spacing:1.083px;-webkit-text-stroke:0.25px #4fa77d;">19,39 €</div>
<div class="b" style="left:2694.0px;top:976.2px;width:31.7px;height:3.0px;background:#111;"></div>
<div class="b" style="left:2866.2px;top:963.2px;width:6.6px;height:6.6px;background:#111;border-radius:50%;"></div>
<div class="b" style="left:2866.2px;top:974.8px;width:6.6px;height:6.6px;background:#111;border-radius:50%;"></div>
<div class="b" style="left:2866.2px;top:986.7px;width:6.6px;height:6.6px;background:#111;border-radius:50%;"></div>
<div class="b" style="left:247.5px;top:1061.3px;width:29.0px;height:29.0px;background:#fff;border:2px solid #e3e3e3;border-radius:7px;box-sizing:border-box;box-shadow:0 1px 3px rgba(0,0,0,0.07);"></div>
<svg class="i" style="left:310px;top:1045.8px" width="70" height="70" viewBox="0 0 70 70" fill="none" stroke="#358563" stroke-width="2.3" stroke-linecap="round" stroke-linejoin="round"><path d="M34.5 7.6 Q36 6.6 37.5 7.6 L56.8 18 Q58 19.6 56.5 19.6 H15.5 Q14 19.6 15.2 18 Z"/><path d="M22 27.4v17.6"/><path d="M31 27.4v17.6"/><path d="M40.7 27.4v17.6"/><path d="M50 27.4v17.6"/><path d="M14.5 53.9h24"/><circle cx="51.8" cy="45.4" r="13.5" fill="#d9f4e5" stroke="none" style="filter:blur(1.5px)"/><g transform="translate(41.4,35.5) scale(0.9)" stroke-width="1.8"><path d="M11 15h2a2 2 0 1 0 0-4h-3c-.6 0-1.1.2-1.4.6L3 17"/><path d="m7 21 1.6-1.4c.3-.4.8-.6 1.4-.6h4c1.1 0 2.1-.4 2.8-1.2l4.6-4.4a2 2 0 0 0-2.75-2.91l-4.2 3.9"/><path d="m2 16 6 6"/><circle cx="16" cy="9" r="2.9"/><circle cx="6" cy="5" r="3"/></g></svg>
<div class="t" id="t48" style="left:478.00px;top:1061.9px;font-size:29px;font-weight:400;color:#111;letter-spacing:0.048px;-webkit-text-stroke:0.25px #111;">27/12/2026</div>
<div class="t" id="t49" style="left:687.00px;top:1062.1px;font-size:28.5px;font-weight:400;color:#111;letter-spacing:-0.963px;-webkit-text-stroke:0.25px #111;">BONIFICO DA EUROTECH SYSTEMS SPA</div>
<div class="b" style="left:1346.0px;top:1052.6px;width:297.6px;height:47.5px;background:#55b886;border-radius:12px;"></div>
<svg class="i" style="left:1364.0px;top:1064.3px;" width="23" height="23" viewBox="0 0 24 24" fill="none" stroke="#fff" stroke-width="2.1" stroke-linecap="round" stroke-linejoin="round"><polyline points="22 7 13.5 15.5 8.5 10.5 2 17"/><polyline points="16 7 22 7 22 13"/></svg>
<div class="t" id="t50" style="left:1397.00px;top:1064.0px;font-size:25px;font-weight:700;color:#fff;letter-spacing:0.313px;-webkit-text-stroke:0.5px #fff;">Vendita Diretta</div>
<svg class="i" style="left:1584.1px;top:1054.8px;" width="42" height="42" viewBox="0 0 24 24" fill="none" stroke="#fff" stroke-width="1.45" stroke-linecap="round" stroke-linejoin="round"><path d="M18 6 6 18"/><path d="m6 6 12 12"/></svg>
<div class="t" id="t51" style="left:1826.50px;top:1060.8px;font-size:29px;font-weight:400;color:#111;letter-spacing:0.000px;-webkit-text-stroke:0.9px #111;">-</div>
<div class="t" id="t52" style="left:2305.00px;top:1062.5px;font-size:29px;font-weight:400;color:#4fa77d;letter-spacing:1.050px;-webkit-text-stroke:0.25px #4fa77d;">12.991,21 €</div>
<div class="b" style="left:2694.0px;top:1074.3px;width:31.7px;height:3.0px;background:#111;"></div>
<div class="b" style="left:2866.2px;top:1061.3px;width:6.6px;height:6.6px;background:#111;border-radius:50%;"></div>
<div class="b" style="left:2866.2px;top:1072.9px;width:6.6px;height:6.6px;background:#111;border-radius:50%;"></div>
<div class="b" style="left:2866.2px;top:1084.8px;width:6.6px;height:6.6px;background:#111;border-radius:50%;"></div>
<div class="b" style="left:247.5px;top:1159.4px;width:29.0px;height:29.0px;background:#fff;border:2px solid #e3e3e3;border-radius:7px;box-sizing:border-box;box-shadow:0 1px 3px rgba(0,0,0,0.07);"></div>
<svg class="i" style="left:310px;top:1143.9px" width="70" height="70" viewBox="0 0 70 70" fill="none" stroke="#358563" stroke-width="2.3" stroke-linecap="round" stroke-linejoin="round"><path d="M34.5 7.6 Q36 6.6 37.5 7.6 L56.8 18 Q58 19.6 56.5 19.6 H15.5 Q14 19.6 15.2 18 Z"/><path d="M22 27.4v17.6"/><path d="M31 27.4v17.6"/><path d="M40.7 27.4v17.6"/><path d="M50 27.4v17.6"/><path d="M14.5 53.9h24"/><circle cx="51.8" cy="45.4" r="13.5" fill="#d9f4e5" stroke="none" style="filter:blur(1.5px)"/><g transform="translate(41.4,35.5) scale(0.9)" stroke-width="1.8"><path d="M11 15h2a2 2 0 1 0 0-4h-3c-.6 0-1.1.2-1.4.6L3 17"/><path d="m7 21 1.6-1.4c.3-.4.8-.6 1.4-.6h4c1.1 0 2.1-.4 2.8-1.2l4.6-4.4a2 2 0 0 0-2.75-2.91l-4.2 3.9"/><path d="m2 16 6 6"/><circle cx="16" cy="9" r="2.9"/><circle cx="6" cy="5" r="3"/></g></svg>
<div class="t" id="t53" style="left:478.00px;top:1159.9px;font-size:29px;font-weight:400;color:#111;letter-spacing:0.333px;-webkit-text-stroke:0.25px #111;">26/12/2026</div>
<div class="t" id="t54" style="left:686.00px;top:1160.2px;font-size:28.5px;font-weight:400;color:#111;letter-spacing:-0.099px;-webkit-text-stroke:0.25px #111;">IMPOSTA BOLLO C/C 4Q 2026</div>
<div class="b" style="left:1346.0px;top:1150.7px;width:383.0px;height:47.5px;background:#4c82e8;border-radius:12px;"></div>
<svg class="i" style="left:1364.0px;top:1162.4px;" width="23" height="23" viewBox="0 0 24 24" fill="none" stroke="#fff" stroke-width="2.1" stroke-linecap="round" stroke-linejoin="round"><path d="M10 12h4"/><path d="M10 8h4"/><path d="M14 21v-3a2 2 0 0 0-4 0v3"/><path d="M6 10H4a2 2 0 0 0-2 2v7a2 2 0 0 0 2 2h16a2 2 0 0 0 2-2V9a2 2 0 0 0-2-2h-2"/><path d="M6 21V5a2 2 0 0 1 2-2h8a2 2 0 0 1 2 2v16"/></svg>
<div class="t" id="t55" style="left:1396.00px;top:1162.1px;font-size:25px;font-weight:700;color:#fff;letter-spacing:-0.132px;-webkit-text-stroke:0.5px #fff;">Commissioni Bancarie</div>
<svg class="i" style="left:1669.5px;top:1152.9px;" width="42" height="42" viewBox="0 0 24 24" fill="none" stroke="#fff" stroke-width="1.45" stroke-linecap="round" stroke-linejoin="round"><path d="M18 6 6 18"/><path d="m6 6 12 12"/></svg>
<div class="t" id="t56" style="left:1826.50px;top:1158.8px;font-size:29px;font-weight:400;color:#111;letter-spacing:0.000px;-webkit-text-stroke:0.9px #111;">-</div>
<div class="t" id="t57" style="left:2306.00px;top:1160.5px;font-size:29px;font-weight:400;color:#bf3a3c;letter-spacing:1.214px;-webkit-text-stroke:0.25px #bf3a3c;">-34,03 €</div>
<div class="b" style="left:2694.0px;top:1172.4px;width:31.7px;height:3.0px;background:#111;"></div>
<div class="b" style="left:2866.2px;top:1159.4px;width:6.6px;height:6.6px;background:#111;border-radius:50%;"></div>
<div class="b" style="left:2866.2px;top:1171.0px;width:6.6px;height:6.6px;background:#111;border-radius:50%;"></div>
<div class="b" style="left:2866.2px;top:1182.9px;width:6.6px;height:6.6px;background:#111;border-radius:50%;"></div>
<div class="b" style="left:247.5px;top:1257.5px;width:29.0px;height:29.0px;background:#fff;border:2px solid #e3e3e3;border-radius:7px;box-sizing:border-box;box-shadow:0 1px 3px rgba(0,0,0,0.07);"></div>
<svg class="i" style="left:310px;top:1242.0px" width="70" height="70" viewBox="0 0 70 70" fill="none" stroke="#358563" stroke-width="2.3" stroke-linecap="round" stroke-linejoin="round"><path d="M34.5 7.6 Q36 6.6 37.5 7.6 L56.8 18 Q58 19.6 56.5 19.6 H15.5 Q14 19.6 15.2 18 Z"/><path d="M22 27.4v17.6"/><path d="M31 27.4v17.6"/><path d="M40.7 27.4v17.6"/><path d="M50 27.4v17.6"/><path d="M14.5 53.9h24"/><circle cx="51.8" cy="45.4" r="13.5" fill="#d9f4e5" stroke="none" style="filter:blur(1.5px)"/><g transform="translate(41.4,35.5) scale(0.9)" stroke-width="1.8"><path d="M11 15h2a2 2 0 1 0 0-4h-3c-.6 0-1.1.2-1.4.6L3 17"/><path d="m7 21 1.6-1.4c.3-.4.8-.6 1.4-.6h4c1.1 0 2.1-.4 2.8-1.2l4.6-4.4a2 2 0 0 0-2.75-2.91l-4.2 3.9"/><path d="m2 16 6 6"/><circle cx="16" cy="9" r="2.9"/><circle cx="6" cy="5" r="3"/></g></svg>
<div class="t" id="t58" style="left:478.00px;top:1258.0px;font-size:29px;font-weight:400;color:#111;letter-spacing:0.333px;-webkit-text-stroke:0.25px #111;">22/12/2026</div>
<div class="t" id="t59" style="left:687.00px;top:1258.2px;font-size:28.5px;font-weight:400;color:#111;letter-spacing:-0.343px;-webkit-text-stroke:0.25px #111;">SALDO ONORARIO VS FATTURA FA-188/2026</div>
<div class="b" style="left:1346.0px;top:1248.8px;width:318.7px;height:47.5px;background:#9f52ee;border-radius:12px;"></div>
<svg class="i" style="left:1364.0px;top:1260.5px;" width="23" height="23" viewBox="0 0 24 24" fill="none" stroke="#fff" stroke-width="2.1" stroke-linecap="round" stroke-linejoin="round"><path d="M20 13c0 5-3.5 7.5-7.66 8.95a1 1 0 0 1-.67-.01C7.5 20.5 4 18 4 13V6a1 1 0 0 1 1-.76c2 0 4.5-1.2 6.24-2.72a1.17 1.17 0 0 1 1.52 0C14.51 3.81 17 5 19 5a1 1 0 0 1 1 1z"/></svg>
<div class="t" id="t60" style="left:1396.00px;top:1260.2px;font-size:25px;font-weight:700;color:#fff;letter-spacing:0.226px;-webkit-text-stroke:0.5px #fff;">Polizze Aziendali</div>
<svg class="i" style="left:1605.2px;top:1251.0px;" width="42" height="42" viewBox="0 0 24 24" fill="none" stroke="#fff" stroke-width="1.45" stroke-linecap="round" stroke-linejoin="round"><path d="M18 6 6 18"/><path d="m6 6 12 12"/></svg>
<div class="t" id="t61" style="left:1826.50px;top:1256.9px;font-size:29px;font-weight:400;color:#111;letter-spacing:0.000px;-webkit-text-stroke:0.9px #111;">-</div>
<div class="t" id="t62" style="left:2306.00px;top:1258.6px;font-size:29px;font-weight:400;color:#bf3a3c;letter-spacing:1.070px;-webkit-text-stroke:0.25px #bf3a3c;">-4.466,74 €</div>
<div class="b" style="left:2694.0px;top:1270.5px;width:31.7px;height:3.0px;background:#111;"></div>
<div class="b" style="left:2866.2px;top:1257.5px;width:6.6px;height:6.6px;background:#111;border-radius:50%;"></div>
<div class="b" style="left:2866.2px;top:1269.1px;width:6.6px;height:6.6px;background:#111;border-radius:50%;"></div>
<div class="b" style="left:2866.2px;top:1281.0px;width:6.6px;height:6.6px;background:#111;border-radius:50%;"></div>
<div class="b" style="left:247.5px;top:1355.5px;width:29.0px;height:29.0px;background:#fff;border:2px solid #e3e3e3;border-radius:7px;box-sizing:border-box;box-shadow:0 1px 3px rgba(0,0,0,0.07);"></div>
<svg class="i" style="left:310px;top:1340.0px" width="70" height="70" viewBox="0 0 70 70" fill="none" stroke="#358563" stroke-width="2.3" stroke-linecap="round" stroke-linejoin="round"><path d="M34.5 7.6 Q36 6.6 37.5 7.6 L56.8 18 Q58 19.6 56.5 19.6 H15.5 Q14 19.6 15.2 18 Z"/><path d="M22 27.4v17.6"/><path d="M31 27.4v17.6"/><path d="M40.7 27.4v17.6"/><path d="M50 27.4v17.6"/><path d="M14.5 53.9h24"/><circle cx="51.8" cy="45.4" r="13.5" fill="#d9f4e5" stroke="none" style="filter:blur(1.5px)"/><g transform="translate(41.4,35.5) scale(0.9)" stroke-width="1.8"><path d="M11 15h2a2 2 0 1 0 0-4h-3c-.6 0-1.1.2-1.4.6L3 17"/><path d="m7 21 1.6-1.4c.3-.4.8-.6 1.4-.6h4c1.1 0 2.1-.4 2.8-1.2l4.6-4.4a2 2 0 0 0-2.75-2.91l-4.2 3.9"/><path d="m2 16 6 6"/><circle cx="16" cy="9" r="2.9"/><circle cx="6" cy="5" r="3"/></g></svg>
<div class="t" id="t63" style="left:478.00px;top:1356.1px;font-size:29px;font-weight:400;color:#111;letter-spacing:0.333px;-webkit-text-stroke:0.25px #111;">20/12/2026</div>
<div class="t" id="t64" style="left:689.00px;top:1356.3px;font-size:28.5px;font-weight:400;color:#111;letter-spacing:-0.320px;-webkit-text-stroke:0.25px #111;">ACCREDITO RIF. NS FATTURA FV-353/2026</div>
<div class="b" style="left:1346.0px;top:1346.8px;width:297.6px;height:47.5px;background:#55b886;border-radius:12px;"></div>
<svg class="i" style="left:1364.0px;top:1358.5px;" width="23" height="23" viewBox="0 0 24 24" fill="none" stroke="#fff" stroke-width="2.1" stroke-linecap="round" stroke-linejoin="round"><polyline points="22 7 13.5 15.5 8.5 10.5 2 17"/><polyline points="16 7 22 7 22 13"/></svg>
<div class="t" id="t65" style="left:1397.00px;top:1358.3px;font-size:25px;font-weight:700;color:#fff;letter-spacing:0.313px;-webkit-text-stroke:0.5px #fff;">Vendita Diretta</div>
<svg class="i" style="left:1584.1px;top:1349.0px;" width="42" height="42" viewBox="0 0 24 24" fill="none" stroke="#fff" stroke-width="1.45" stroke-linecap="round" stroke-linejoin="round"><path d="M18 6 6 18"/><path d="m6 6 12 12"/></svg>
<div class="t" id="t66" style="left:1826.50px;top:1355.0px;font-size:29px;font-weight:400;color:#111;letter-spacing:0.000px;-webkit-text-stroke:0.9px #111;">-</div>
<div class="t" id="t67" style="left:2305.00px;top:1356.7px;font-size:29px;font-weight:400;color:#4fa77d;letter-spacing:1.050px;-webkit-text-stroke:0.25px #4fa77d;">14.665,64 €</div>
<div class="b" style="left:2694.0px;top:1368.5px;width:31.7px;height:3.0px;background:#111;"></div>
<div class="b" style="left:2866.2px;top:1355.5px;width:6.6px;height:6.6px;background:#111;border-radius:50%;"></div>
<div class="b" style="left:2866.2px;top:1367.1px;width:6.6px;height:6.6px;background:#111;border-radius:50%;"></div>
<div class="b" style="left:2866.2px;top:1379.0px;width:6.6px;height:6.6px;background:#111;border-radius:50%;"></div>
<div class="b" style="left:247.5px;top:1453.6px;width:29.0px;height:29.0px;background:#fff;border:2px solid #e3e3e3;border-radius:7px;box-sizing:border-box;box-shadow:0 1px 3px rgba(0,0,0,0.07);"></div>
<svg class="i" style="left:310px;top:1438.1px" width="70" height="70" viewBox="0 0 70 70" fill="none" stroke="#358563" stroke-width="2.3" stroke-linecap="round" stroke-linejoin="round"><path d="M34.5 7.6 Q36 6.6 37.5 7.6 L56.8 18 Q58 19.6 56.5 19.6 H15.5 Q14 19.6 15.2 18 Z"/><path d="M22 27.4v17.6"/><path d="M31 27.4v17.6"/><path d="M40.7 27.4v17.6"/><path d="M50 27.4v17.6"/><path d="M14.5 53.9h24"/><circle cx="51.8" cy="45.4" r="13.5" fill="#d9f4e5" stroke="none" style="filter:blur(1.5px)"/><g transform="translate(41.4,35.5) scale(0.9)" stroke-width="1.8"><path d="M11 15h2a2 2 0 1 0 0-4h-3c-.6 0-1.1.2-1.4.6L3 17"/><path d="m7 21 1.6-1.4c.3-.4.8-.6 1.4-.6h4c1.1 0 2.1-.4 2.8-1.2l4.6-4.4a2 2 0 0 0-2.75-2.91l-4.2 3.9"/><path d="m2 16 6 6"/><circle cx="16" cy="9" r="2.9"/><circle cx="6" cy="5" r="3"/></g></svg>
<div class="t" id="t68" style="left:477.00px;top:1454.2px;font-size:29px;font-weight:400;color:#111;letter-spacing:0.159px;-webkit-text-stroke:0.25px #111;">19/12/2026</div>
<div class="t" id="t69" style="left:689.00px;top:1454.4px;font-size:28.5px;font-weight:400;color:#111;letter-spacing:-0.167px;-webkit-text-stroke:0.25px #111;">ACCREDITO SALDO FT FV-349/2026 RATA 2/3</div>
<div class="b" style="left:1346.0px;top:1444.9px;width:297.6px;height:47.5px;background:#55b886;border-radius:12px;"></div>
<svg class="i" style="left:1364.0px;top:1456.6px;" width="23" height="23" viewBox="0 0 24 24" fill="none" stroke="#fff" stroke-width="2.1" stroke-linecap="round" stroke-linejoin="round"><polyline points="22 7 13.5 15.5 8.5 10.5 2 17"/><polyline points="16 7 22 7 22 13"/></svg>
<div class="t" id="t70" style="left:1397.00px;top:1456.4px;font-size:25px;font-weight:700;color:#fff;letter-spacing:0.313px;-webkit-text-stroke:0.5px #fff;">Vendita Diretta</div>
<svg class="i" style="left:1584.1px;top:1447.1px;" width="42" height="42" viewBox="0 0 24 24" fill="none" stroke="#fff" stroke-width="1.45" stroke-linecap="round" stroke-linejoin="round"><path d="M18 6 6 18"/><path d="m6 6 12 12"/></svg>
<div class="t" id="t71" style="left:1826.50px;top:1453.1px;font-size:29px;font-weight:400;color:#111;letter-spacing:0.000px;-webkit-text-stroke:0.9px #111;">-</div>
<div class="t" id="t72" style="left:2307.00px;top:1454.8px;font-size:29px;font-weight:400;color:#4fa77d;letter-spacing:0.766px;-webkit-text-stroke:0.25px #4fa77d;">4.517,27 €</div>
<div class="b" style="left:2694.0px;top:1466.6px;width:31.7px;height:3.0px;background:#111;"></div>
<div class="b" style="left:2866.2px;top:1453.6px;width:6.6px;height:6.6px;background:#111;border-radius:50%;"></div>
<div class="b" style="left:2866.2px;top:1465.2px;width:6.6px;height:6.6px;background:#111;border-radius:50%;"></div>
<div class="b" style="left:2866.2px;top:1477.1px;width:6.6px;height:6.6px;background:#111;border-radius:50%;"></div>
</body></html>
